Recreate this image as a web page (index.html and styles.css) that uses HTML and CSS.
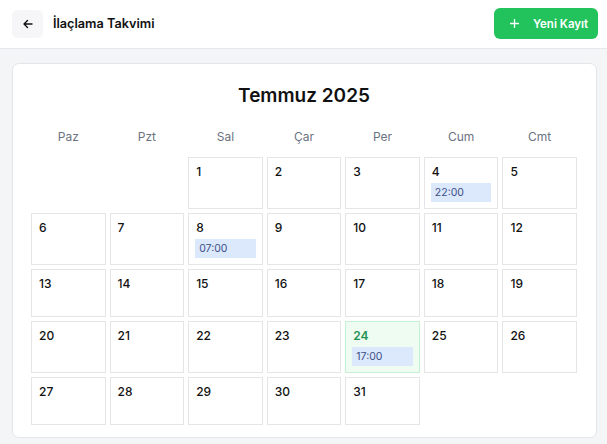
FILE: index.html
```html
<!DOCTYPE html>
<html lang="tr">
<head>
<meta charset="utf-8">
<title>İlaçlama Takvimi</title>
<link rel="stylesheet" href="styles.css">
</head>
<body>
<header class="topbar">
  <div class="topbar-left">
    <button class="back-btn" aria-label="Geri">
      <svg width="12" height="12" viewBox="0 0 12 12" fill="none" stroke="#111" stroke-width="1.4" stroke-linecap="round" stroke-linejoin="round"><path d="M10 6H2M5.5 2.5L2 6l3.5 3.5"/></svg>
    </button>
    <h1 class="page-title">İlaçlama Takvimi</h1>
  </div>
  <button class="new-btn">
    <svg width="9" height="9" viewBox="0 0 9 9" fill="none" stroke="#fff" stroke-width="1.3" stroke-linecap="round"><path d="M4.5 0.5v8M0.5 4.5h8"/></svg>
    <span>Yeni Kayıt</span>
  </button>
</header>
<main class="content">
  <section class="card">
    <h2 class="month">Temmuz 2025</h2>
    <div class="weekdays">
      <div>Paz</div><div>Pzt</div><div>Sal</div><div>Çar</div><div>Per</div><div>Cum</div><div>Cmt</div>
    </div>
    <div class="grid">
      <div class="blank"></div>
      <div class="blank"></div>
      <div class="day"><span class="num">1</span></div>
      <div class="day"><span class="num">2</span></div>
      <div class="day"><span class="num">3</span></div>
      <div class="day"><span class="num">4</span><span class="event">22:00</span></div>
      <div class="day"><span class="num">5</span></div>

      <div class="day"><span class="num">6</span></div>
      <div class="day"><span class="num">7</span></div>
      <div class="day"><span class="num">8</span><span class="event">07:00</span></div>
      <div class="day"><span class="num">9</span></div>
      <div class="day"><span class="num">10</span></div>
      <div class="day"><span class="num">11</span></div>
      <div class="day"><span class="num">12</span></div>

      <div class="day"><span class="num">13</span></div>
      <div class="day"><span class="num">14</span></div>
      <div class="day"><span class="num">15</span></div>
      <div class="day"><span class="num">16</span></div>
      <div class="day"><span class="num">17</span></div>
      <div class="day"><span class="num">18</span></div>
      <div class="day"><span class="num">19</span></div>

      <div class="day"><span class="num">20</span></div>
      <div class="day"><span class="num">21</span></div>
      <div class="day"><span class="num">22</span></div>
      <div class="day"><span class="num">23</span></div>
      <div class="day today"><span class="num">24</span><span class="event">17:00</span></div>
      <div class="day"><span class="num">25</span></div>
      <div class="day"><span class="num">26</span></div>

      <div class="day"><span class="num">27</span></div>
      <div class="day"><span class="num">28</span></div>
      <div class="day"><span class="num">29</span></div>
      <div class="day"><span class="num">30</span></div>
      <div class="day"><span class="num">31</span></div>
    </div>
  </section>
</main>
</body>
</html>
```
FILE: styles.css
```css
* { box-sizing: border-box; }
html, body { margin: 0; padding: 0; }
body {
  font-family: Inter, "Noto Sans", "DejaVu Sans", sans-serif;
  background: #f4f5f7;
  color: #111;
  width: 607px;
  height: 444px;
  overflow: hidden;
}
.topbar {
  height: 49px;
  background: #fff;
  border-bottom: 1px solid #e6e7ea;
  display: flex;
  align-items: center;
  justify-content: space-between;
  padding: 0 9px 1px 12px;
}
.topbar-left { display: flex; align-items: center; gap: 10px; }
.back-btn {
  width: 31px;
  height: 28px;
  border: none;
  border-radius: 6px;
  background: #f6f6f8;
  display: flex;
  align-items: center;
  justify-content: center;
  padding: 0;
}
.page-title {
  margin: 0;
  font-size: 12.7px;
  font-weight: 600;
  color: #111;
}
.new-btn {
  height: 31px;
  width: 104px;
  border: none;
  border-radius: 6px;
  background: #22c35d;
  color: #fff;
  display: flex;
  align-items: center;
  gap: 14px;
  padding: 0 0 0 16px;
  font-family: inherit;
  font-size: 11.5px;
  font-weight: 600;
}
.content { padding: 14px 10px 0 12px; }
.card {
  background: #fff;
  border: 1px solid #e3e5e8;
  border-radius: 7px;
  padding: 18px 19px 13px 18px;
  height: 375px;
}
.month {
  margin: 0;
  text-align: center;
  font-size: 19px;
  line-height: 28px;
  font-weight: 600;
  color: #111;
}
.weekdays {
  margin-top: 11px;
  display: grid;
  grid-template-columns: repeat(7, 1fr);
  column-gap: 4px;
  text-align: center;
  font-size: 12px;
  line-height: 16px;
  color: #6b7280;
  padding: 8px 0;
}
.grid {
  margin-top: 4px;
  display: grid;
  grid-template-columns: repeat(7, 1fr);
  gap: 4px;
}
.day {
  min-height: 48px;
  border: 1px solid #e5e5e7;
  padding: 6px;
  display: flex;
  flex-direction: column;
  align-items: flex-start;
}
.num {
  font-size: 12px;
  line-height: 16px;
  font-weight: 500;
  color: #111;
  padding-left: 1px;
}
.event {
  margin-top: 3px;
  align-self: stretch;
  height: 19px;
  background: #dce8fc;
  color: #3b4f87;
  font-size: 10.5px;
  line-height: 19px;
  padding-left: 4px;
}
.today {
  background: #effcf2;
  border-color: #c6f0d2;
}
.today .num { color: #249150; font-weight: 600; }
```
